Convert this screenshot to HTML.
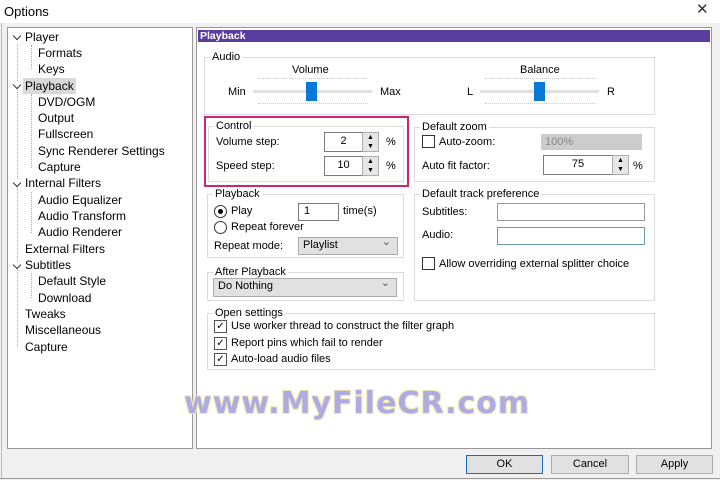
<!DOCTYPE html>
<html><head><meta charset="utf-8"><style>
*{box-sizing:border-box;margin:0;padding:0}
body{width:720px;height:480px;background:#f0f0f0;font-family:"Liberation Sans",sans-serif;font-size:11px;color:#000;position:relative;overflow:hidden}
.a{position:absolute;white-space:nowrap}
.t{position:absolute;white-space:nowrap;line-height:13px}
.g{position:absolute;border:1px solid #dcdcdc}
.gl{position:absolute;background:#fff;padding:0 2px;top:-7px;left:5px;line-height:13px}
.in{position:absolute;background:#fff;border:1px solid #7a7a7a}
.sp{position:absolute;background:#e6e6e6;border:1px solid #adadad}
.cb{position:absolute;width:13px;height:13px;border:1px solid #333;background:#fff}
.cmb{position:absolute;background:#e1e1e1;border:1px solid #adadad;padding-left:4px;line-height:15px}
.cmb:after{content:"⌄";position:absolute;right:6px;top:-3px;color:#555;font-size:11px}
.btn{position:absolute;background:#e1e1e1;border:1px solid #adadad;text-align:center;line-height:17px}
.chev{position:absolute;width:6px;height:6px;border-right:1.5px solid #333;border-bottom:1.5px solid #333;transform:rotate(45deg)}
</style></head><body>
<div class="a" style="left:0;top:0;width:720px;height:23px;background:#fff"></div>
<div class="t" style="left:4px;top:5px;font-size:13px">Options</div>
<div class="t" style="left:696px;top:3px;font-size:15px;color:#333">✕</div>
<div class="a" style="left:1px;top:23px;width:1px;height:456px;background:#bbb"></div>
<div class="a" style="left:0;top:478px;width:720px;height:1px;background:#999"></div>

<!-- tree -->
<div class="a" style="left:7px;top:27px;width:186px;height:422px;background:#fff;border:1px solid #999"></div>
<div class="a" style="left:17px;top:44px;width:0;height:303px;border-left:1px dotted #aaa"></div>
<div class="a" style="left:31px;top:45px;width:0;height:24px;border-left:1px dotted #aaa"></div>
<div class="a" style="left:31px;top:94px;width:0;height:74px;border-left:1px dotted #aaa"></div>
<div class="a" style="left:31px;top:192px;width:0;height:41px;border-left:1px dotted #aaa"></div>
<div class="a" style="left:31px;top:273px;width:0;height:25px;border-left:1px dotted #aaa"></div>
<div class="a" style="left:23px;top:78px;width:53px;height:16px;background:#d9d9d9"></div>
<div class="chev" style="left:14px;top:33px;background:#fff"></div>
<div class="chev" style="left:14px;top:82px;background:#fff"></div>
<div class="chev" style="left:14px;top:180px;background:#fff"></div>
<div class="chev" style="left:14px;top:262px;background:#fff"></div>
<div style="position:absolute;left:0;top:0;font-size:12px">
<div class="t" style="left:25px;top:31px">Player</div>
<div class="t" style="left:38px;top:47px">Formats</div>
<div class="t" style="left:38px;top:63px">Keys</div>
<div class="t" style="left:25px;top:80px">Playback</div>
<div class="t" style="left:38px;top:96px">DVD/OGM</div>
<div class="t" style="left:38px;top:112px">Output</div>
<div class="t" style="left:38px;top:128px">Fullscreen</div>
<div class="t" style="left:38px;top:145px">Sync Renderer Settings</div>
<div class="t" style="left:38px;top:161px">Capture</div>
<div class="t" style="left:25px;top:177px">Internal Filters</div>
<div class="t" style="left:38px;top:194px">Audio Equalizer</div>
<div class="t" style="left:38px;top:210px">Audio Transform</div>
<div class="t" style="left:38px;top:226px">Audio Renderer</div>
<div class="t" style="left:25px;top:243px">External Filters</div>
<div class="t" style="left:25px;top:259px">Subtitles</div>
<div class="t" style="left:38px;top:275px">Default Style</div>
<div class="t" style="left:38px;top:292px">Download</div>
<div class="t" style="left:25px;top:308px">Tweaks</div>
<div class="t" style="left:25px;top:324px">Miscellaneous</div>
<div class="t" style="left:25px;top:341px">Capture</div>
</div>

<!-- right panel -->
<div class="a" style="left:196px;top:27px;width:516px;height:422px;background:#fff;border:1px solid #999"></div>
<div class="a" style="left:198px;top:30px;width:512px;height:12px;background:#5a3d9e"></div>
<div class="t" style="left:200px;top:30px;color:#fff;font-weight:bold;font-size:10.5px;line-height:12px">Playback</div>

<div class="g" style="left:204px;top:57px;width:451px;height:58px"><span class="gl">Audio</span></div>
<div class="t" style="left:292px;top:64px">Volume</div>
<div class="t" style="left:228px;top:86px">Min</div>
<div class="t" style="left:380px;top:86px">Max</div>
<div class="a" style="left:253px;top:90px;width:119px;height:3px;background:#e0e0e0"></div>
<div class="a" style="left:258px;top:78px;width:110px;border-top:1px dotted #ccc"></div>
<div class="a" style="left:258px;top:103px;width:110px;border-top:1px dotted #ccc"></div>
<div class="a" style="left:306px;top:82px;width:11px;height:19px;background:#0a78d7"></div>
<div class="t" style="left:520px;top:64px">Balance</div>
<div class="t" style="left:467px;top:86px">L</div>
<div class="t" style="left:607px;top:86px">R</div>
<div class="a" style="left:480px;top:90px;width:119px;height:3px;background:#e0e0e0"></div>
<div class="a" style="left:485px;top:78px;width:110px;border-top:1px dotted #ccc"></div>
<div class="a" style="left:485px;top:103px;width:110px;border-top:1px dotted #ccc"></div>
<div class="a" style="left:534px;top:82px;width:11px;height:19px;background:#0a78d7"></div>

<div class="a" style="left:204px;top:116px;width:205px;height:71px;border:2px solid #c8286e"></div>
<div class="g" style="left:208px;top:126px;width:196px;height:56px"><span class="gl">Control</span></div>
<div class="t" style="left:216px;top:136px">Volume step:</div>
<div class="in" style="left:324px;top:132px;width:39px;height:20px;text-align:center;line-height:16px">2</div>
<div class="sp" style="left:362px;top:132px;width:17px;height:20px;font-size:7px;line-height:9px;text-align:center">▲<br>▼</div>
<div class="t" style="left:386px;top:136px">%</div>
<div class="t" style="left:216px;top:160px">Speed step:</div>
<div class="in" style="left:324px;top:156px;width:39px;height:20px;text-align:center;line-height:16px">10</div>
<div class="sp" style="left:362px;top:156px;width:17px;height:20px;font-size:7px;line-height:9px;text-align:center">▲<br>▼</div>
<div class="t" style="left:386px;top:160px">%</div>

<div class="g" style="left:414px;top:127px;width:241px;height:55px"><span class="gl">Default zoom</span></div>
<div class="cb" style="left:422px;top:135px"></div>
<div class="t" style="left:439px;top:136px">Auto-zoom:</div>
<div class="a" style="left:541px;top:134px;width:101px;height:16px;background:#ccc;color:#888;padding-left:4px;line-height:16px">100%</div>
<div class="t" style="left:422px;top:160px">Auto fit factor:</div>
<div class="in" style="left:543px;top:155px;width:70px;height:20px;text-align:center;line-height:16px">75</div>
<div class="sp" style="left:612px;top:155px;width:17px;height:20px;font-size:7px;line-height:9px;text-align:center">▲<br>▼</div>
<div class="t" style="left:633px;top:160px">%</div>

<div class="g" style="left:207px;top:194px;width:197px;height:64px"><span class="gl">Playback</span></div>
<div class="a" style="left:214px;top:205px;width:13px;height:13px;border:1px solid #333;border-radius:50%;background:#fff"></div>
<div class="a" style="left:218px;top:209px;width:5px;height:5px;border-radius:50%;background:#000"></div>
<div class="t" style="left:231px;top:205px">Play</div>
<div class="in" style="left:298px;top:203px;width:41px;height:18px;padding-left:5px;line-height:15px">1</div>
<div class="t" style="left:343px;top:205px">time(s)</div>
<div class="a" style="left:214px;top:221px;width:13px;height:13px;border:1px solid #333;border-radius:50%;background:#fff"></div>
<div class="t" style="left:231px;top:221px">Repeat forever</div>
<div class="t" style="left:214px;top:240px">Repeat mode:</div>
<div class="cmb" style="left:298px;top:237px;width:100px;height:18px">Playlist</div>

<div class="g" style="left:207px;top:272px;width:197px;height:29px"><span class="gl">After Playback</span></div>
<div class="cmb" style="left:213px;top:278px;width:184px;height:19px">Do Nothing</div>

<div class="g" style="left:414px;top:194px;width:241px;height:107px"><span class="gl">Default track preference</span></div>
<div class="t" style="left:422px;top:206px">Subtitles:</div>
<div class="in" style="left:497px;top:203px;width:148px;height:18px;border-color:#999"></div>
<div class="t" style="left:422px;top:229px">Audio:</div>
<div class="in" style="left:497px;top:227px;width:148px;height:18px;border-color:#6a9aa8"></div>
<div class="cb" style="left:422px;top:257px"></div>
<div class="t" style="left:439px;top:258px">Allow overriding external splitter choice</div>

<div class="g" style="left:207px;top:313px;width:448px;height:57px"><span class="gl">Open settings</span></div>
<div class="cb" style="left:214px;top:320px;border-color:#555;font-size:10px;line-height:11px;text-align:center">✓</div>
<div class="t" style="left:231px;top:320px">Use worker thread to construct the filter graph</div>
<div class="cb" style="left:214px;top:337px;border-color:#555;font-size:10px;line-height:11px;text-align:center">✓</div>
<div class="t" style="left:231px;top:337px">Report pins which fail to render</div>
<div class="cb" style="left:214px;top:353px;border-color:#555;font-size:10px;line-height:11px;text-align:center">✓</div>
<div class="t" style="left:231px;top:353px">Auto-load audio files</div>

<div class="a" style="left:184px;top:387px;font-family:'DejaVu Sans',sans-serif;font-size:30px;font-weight:bold;color:#aeaae4;letter-spacing:1px;line-height:34px;text-shadow:1px 1px 0 #f3ecb0,-1px -1px 0 #f3ecb0,1px -1px 0 #f3ecb0,-1px 1px 0 #f3ecb0">www.MyFileCR.com</div>

<div class="btn" style="left:466px;top:455px;width:77px;height:19px;border-color:#1a6fb8">OK</div>
<div class="btn" style="left:551px;top:455px;width:78px;height:19px">Cancel</div>
<div class="btn" style="left:636px;top:455px;width:77px;height:19px">Apply</div>
</body></html>
